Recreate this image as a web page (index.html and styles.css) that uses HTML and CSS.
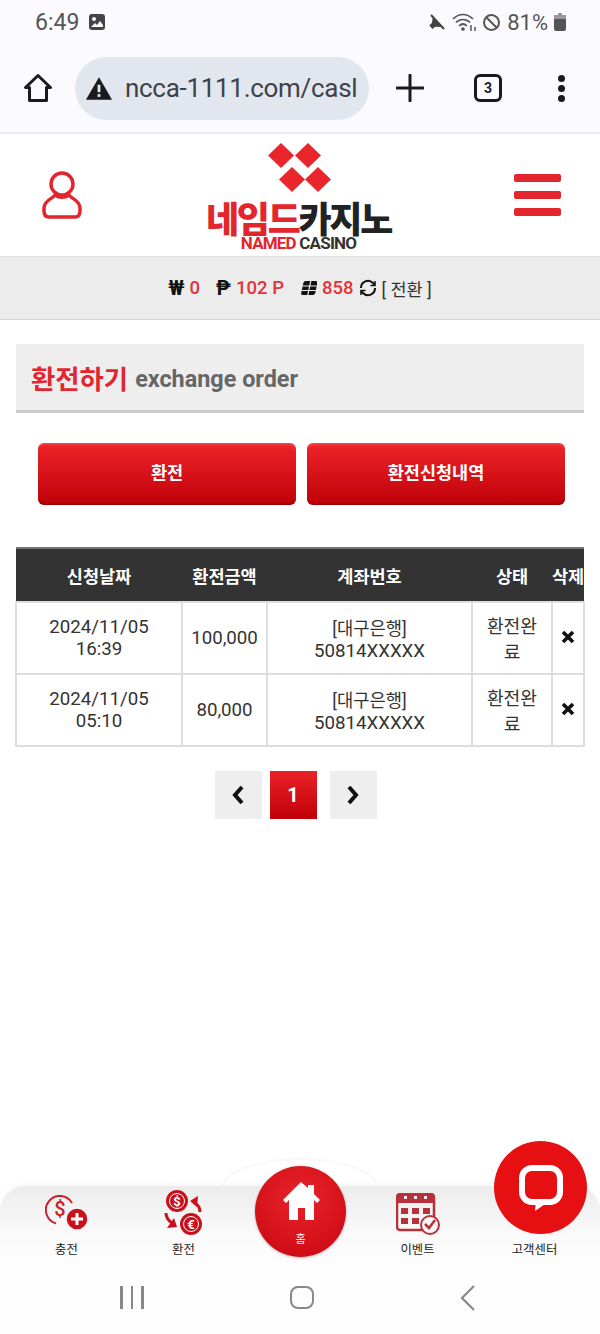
FILE: index.html
```html
<!DOCTYPE html>
<html lang="ko">
<head>
  <meta charset="UTF-8" />
  <meta name="viewport" content="width=device-width, initial-scale=1.0"/>
  <title>네임드카지노 - 환전하기</title>
  <link rel="stylesheet" href="styles.css">
</head>
<body>
<div class="page">

  <div class="status-bar">
    <div class="status-left">
      <span class="status-time">6:49</span>
      <svg width="18" height="18" viewBox="0 0 18 18"><rect x="1" y="1" width="16" height="16" rx="3" fill="#444"/><circle cx="6" cy="6" r="2" fill="#fafaff"/><path d="M3 14l4-4 2 2 3-4 3 4v2H3z" fill="#fafaff"/></svg>
    </div>
    <div class="status-right">
      <svg width="18" height="18" viewBox="0 0 18 18"><path d="M1 6.500h3.500L9.500 2v14L4.500 11.500H1z" fill="#444" transform="rotate(-40 9 9)"/><path d="M3 2l13 14" stroke="#444" stroke-width="2"/></svg>
      <svg class="wifi" width="24" height="20" viewBox="0 0 24 20" fill="none" stroke="#555" stroke-width="1.700"><path d="M1 7c6-6 14-6 20 0"/><path d="M4 10.500c4-4 10-4 14 0"/><path d="M7 14c2.500-2.500 5.500-2.500 8 0"/><circle cx="11" cy="17" r="1" fill="#555"/><path d="M19 19v-6M23 15l0 4" stroke-width="1.500"/></svg>
      <svg width="19" height="19" viewBox="0 0 19 19" fill="none" stroke="#555" stroke-width="2"><circle cx="9.500" cy="9.500" r="7.500"/><path d="M4 4l11 11"/></svg>
      <span>81%</span>
      <svg width="12" height="18" viewBox="0 0 12 18"><rect x="4" y="0" width="4" height="3" fill="#999"/><rect x="0" y="2" width="12" height="4" fill="#999"/><path d="M0 6h12v10a2 2 0 0 1-2 2H2a2 2 0 0 1-2-2z" fill="#555"/></svg>
    </div>
  </div>

  <div class="browser-bar">
    <svg class="browser-home" width="30" height="30" viewBox="0 0 30 30" fill="none" stroke="#1b1b1f" stroke-width="3" stroke-linejoin="round"><path d="M15 2.500L2.500 14.500H6.500V27.500H23.500V14.500H27.500z"/></svg>
    <div class="url-pill">
      <svg width="28" height="25" viewBox="0 0 30 26"><path d="M15 1L29 25H1z" fill="#1b1b1f"/><rect x="13.500" y="9" width="3" height="8" fill="#e2e6ef"/><rect x="13.500" y="19" width="3" height="3" fill="#e2e6ef"/></svg>
      <span class="url-text">ncca-1111.com/casl</span>
    </div>
    <svg class="browser-plus" width="28" height="28" viewBox="0 0 28 28"><path d="M14 1v26M1 14h26" stroke="#1b1b1f" stroke-width="3" stroke-linecap="round"/></svg>
    <div class="tab-count">3</div>
    <div class="browser-dots"><i></i><i></i><i></i></div>
  </div>

  <header class="site-header">
    <svg class="user-icon" width="42" height="48" viewBox="0 0 42 48" fill="none" stroke="#e3262e" stroke-width="3.500"><circle cx="21" cy="13" r="11"/><path d="M14 24c-1 3-11 5-11 13v3c0 4 2 6 5 6h26c3 0 5-2 5-6v-3c0-8-10-10-11-13c-4 3-10 3-14 0z" stroke-linejoin="round"/></svg>
    <div class="logo">
      <svg width="66" height="50" viewBox="0 0 66 50" fill="#e8262c"><path d="M15 0l13 12.500L15 25 2 12.500z"/><path d="M42 0l13 12.500L42 25 29 12.500z"/><path d="M26 24l13 12.500L26 49 13 36.500z"/><path d="M52 24l13 12.500L52 49 39 36.500z"/></svg>
      <div class="logo-kr"><span class="logo-red">네임드</span><span>카지노</span></div>
      <div class="logo-en"><span class="logo-red">NAMED</span> CASINO</div>
    </div>
    <div class="burger"><i></i><i></i><i></i></div>
  </header>

  <div class="coin-bar">
    <span class="coin-sym">₩</span><span class="coin-val coin-won">0</span>
    <span class="coin-sym coin-gap">₱</span><span class="coin-val coin-point">102 P</span>
    <svg class="coin-gap" width="17" height="16" viewBox="0 0 17 16"><g transform="skewX(-12)"><rect x="4" y="1" width="14" height="14" rx="2" fill="#111"/><path d="M11 1v14M4 6h14M4 10.500h14" stroke="#eee" stroke-width="1.200"/></g></svg>
    <span class="coin-val coin-chip">858</span>
    <svg class="coin-refresh" width="18" height="18" viewBox="0 0 18 18" fill="none" stroke="#111" stroke-width="2"><path d="M2 9a7 7 0 0 1 12-5l2 2"/><path d="M16 9a7 7 0 0 1-12 5l-2-2"/><path d="M16 2v4.500h-4.500M2 16v-4.500h4.500" stroke-width="1.500"/></svg>
    <span class="coin-link">[ 전환 ]</span>
  </div>

  <main class="content">
    <div class="page-title"><strong>환전하기</strong> <span>exchange order</span></div>

    <div class="tab-buttons">
      <a class="red-btn">환전</a>
      <a class="red-btn">환전신청내역</a>
    </div>

    <table class="order-table">
      <colgroup>
        <col class="col-date"><col class="col-amount"><col class="col-account"><col class="col-state"><col class="col-del">
      </colgroup>
      <thead>
        <tr><th>신청날짜</th><th>환전금액</th><th>계좌번호</th><th>상태</th><th>삭제</th></tr>
      </thead>
      <tbody>
        <tr>
          <td>2024/11/05<br>16:39</td>
          <td>100,000</td>
          <td><span class="bank-name">[대구은행]</span><br>50814XXXXX</td>
          <td class="cell-state">환전완료</td>
          <td><svg width="14" height="14" viewBox="0 0 14 14"><path d="M2 2l10 10M12 2L2 12" stroke="#111" stroke-width="3.600"/></svg></td>
        </tr>
        <tr>
          <td>2024/11/05<br>05:10</td>
          <td>80,000</td>
          <td><span class="bank-name">[대구은행]</span><br>50814XXXXX</td>
          <td class="cell-state">환전완료</td>
          <td><svg width="14" height="14" viewBox="0 0 14 14"><path d="M2 2l10 10M12 2L2 12" stroke="#111" stroke-width="3.600"/></svg></td>
        </tr>
      </tbody>
    </table>

    <div class="pager">
      <a class="pager-btn"><svg width="14" height="20" viewBox="0 0 14 20" fill="none" stroke="#111" stroke-width="4"><path d="M11 2L4 10l7 8"/></svg></a>
      <a class="pager-btn pager-on">1</a>
      <a class="pager-btn pager-next"><svg width="14" height="20" viewBox="0 0 14 20" fill="none" stroke="#111" stroke-width="4"><path d="M3 2l7 8-7 8"/></svg></a>
    </div>
  </main>

  <nav class="bottom-nav">
    <div class="home-bump"></div>
    <a class="nav-item">
      <svg class="icon-charge" width="44" height="36" viewBox="0 0 44 36"><path d="M27 8A14 14 0 1 0 11 28.400" fill="none" stroke="#c9202a" stroke-width="2"/><text x="15" y="21" class="nav-dollar" fill="#c9202a">$</text><circle cx="32" cy="24" r="11" fill="#c9101c" stroke="#f4f4f4" stroke-width="1.500"/><path d="M32 18v12M26 24h12" stroke="#fff" stroke-width="3"/></svg>
      <span>충전</span>
    </a>
    <a class="nav-item">
      <svg width="40" height="46" viewBox="0 0 40 46"><circle cx="13" cy="11" r="11" fill="#c9101c"/><circle cx="13" cy="11" r="7.500" fill="none" stroke="#fff" stroke-width="1"/><text x="13" y="15.500" class="nav-coin" fill="#fff">$</text><circle cx="27" cy="34" r="11" fill="#c9101c"/><circle cx="27" cy="34" r="7.500" fill="none" stroke="#fff" stroke-width="1"/><text x="27" y="38.500" class="nav-coin" fill="#fff">€</text><path d="M36 22C36 17 33 14 30 12.500" fill="none" stroke="#c9101c" stroke-width="3"/><path d="M26 11L34 6 33 17z" fill="#c9101c"/><path d="M2 23C2 28 5 31 8 33" fill="none" stroke="#c9101c" stroke-width="3"/><path d="M13 37L3 38 10 28z" fill="#c9101c"/></svg>
      <span>환전</span>
    </a>
    <a class="nav-item nav-home">
      <svg width="38" height="40" viewBox="0 0 38 40"><path d="M19 1L1 19l3 3 3-3v20h9V27h7v12h9V19l3 3 3-3-6-6V4h-6v3z" fill="#fff"/></svg>
      <span>홈</span>
    </a>
    <a class="nav-item">
      <svg class="icon-event" width="44" height="42" viewBox="0 0 44 42"><rect x="1" y="1" width="37" height="36" rx="3" fill="none" stroke="#b8303a" stroke-width="2.500"/><rect x="1" y="1" width="37" height="9" fill="#b8303a"/><g fill="#b8303a"><rect x="5" y="15" width="7" height="6"/><rect x="16" y="15" width="7" height="6"/><rect x="27" y="15" width="7" height="6"/><rect x="5" y="25" width="7" height="6"/><rect x="16" y="25" width="7" height="6"/></g><g fill="#f2f2f2"><rect x="8" y="3" width="3" height="3"/><rect x="18" y="3" width="3" height="3"/><rect x="28" y="3" width="3" height="3"/></g><circle cx="34" cy="32" r="9" fill="#f6f6f6" stroke="#b8303a" stroke-width="2"/><path d="M29 31l4 4 6-8" fill="none" stroke="#b8303a" stroke-width="2.500"/></svg>
      <span>이벤트</span>
    </a>
    <a class="nav-item nav-chat">
      <span>고객센터</span>
    </a>
    <a class="chat-fab">
      <svg width="46" height="46" viewBox="0 0 46 46"><rect x="4" y="3" width="38" height="34" rx="10" fill="none" stroke="#fff" stroke-width="6"/><path d="M18 35L17 46 33 35z" fill="#fff"/></svg>
    </a>
  </nav>

  <div class="android-nav">
    <div class="android-recent"><i></i><i></i><i></i></div>
    <div class="android-home"></div>
    <svg width="16" height="26" viewBox="0 0 16 26" fill="none" stroke="#888" stroke-width="2.200"><path d="M14 1L2 13l12 12"/></svg>
  </div>

</div>
</body>
</html>
```

FILE: styles.css
```css
* {
  box-sizing: border-box;
}
body {
  margin: 0;
  background: #fff;
  font-family: Roboto, 'Noto Sans CJK KR', sans-serif;
  color: #222;
}
.page {
  width: 600px;
  height: 1334px;
  display: flex;
  flex-direction: column;
  overflow: hidden;
}

/* phone status bar */
.status-bar {
  height: 44px;
  padding: 0 34px 0 35px;
  background: #fafaff;
  display: flex;
  justify-content: space-between;
  align-items: center;
  font-size: 22px;
  color: #555;
}
.status-left {
  display: flex;
  align-items: center;
  gap: 9px;
}
.status-time {
  font-size: 23px;
}
.status-right {
  display: flex;
  align-items: center;
  gap: 6px;
}

/* browser toolbar */
.browser-bar {
  height: 90px;
  padding: 0 0 0 23px;
  background: #fafaff;
  border-bottom: 2px solid #ebebeb;
  display: flex;
  align-items: center;
}
.url-pill {
  width: 294px;
  height: 63px;
  margin-left: 22px;
  padding-left: 10px;
  background: #e2e6ef;
  border-radius: 32px;
  display: flex;
  align-items: center;
  gap: 12px;
  overflow: hidden;
}
.url-text {
  width: 232px;
  overflow: hidden;
  white-space: nowrap;
  font-size: 26px;
  letter-spacing: -0.3px;
  color: #3f4248;
}
.browser-plus {
  margin-left: 27px;
}
.tab-count {
  width: 28px;
  height: 28px;
  margin-left: 50px;
  border: 3px solid #1b1b1f;
  border-radius: 6px;
  display: flex;
  justify-content: center;
  align-items: center;
  font-size: 14px;
  font-weight: 700;
  color: #1b1b1f;
}
.browser-dots {
  margin-left: 56px;
  display: flex;
  flex-direction: column;
  gap: 3px;
}
.browser-dots i {
  width: 7px;
  height: 7px;
  border-radius: 50%;
  background: #1b1b1f;
}

/* site header */
.site-header {
  height: 122px;
  padding: 0 39px 0 41px;
  display: flex;
  justify-content: space-between;
  align-items: center;
}
.logo {
  width: 190px;
  margin-top: 4px;
  display: flex;
  flex-direction: column;
  align-items: center;
}
.logo-kr {
  margin-top: 6px;
  font-family: 'Noto Sans CJK KR', sans-serif;
  font-size: 36px;
  font-weight: 900;
  line-height: 36px;
  letter-spacing: -2.300px;
  color: #222;
  white-space: nowrap;
}
.logo-en {
  margin-top: 0;
  font-size: 17px;
  font-weight: 700;
  line-height: 17px;
  letter-spacing: -0.800px;
  color: #333;
  white-space: nowrap;
}
.logo-red {
  color: #e3262e;
}
.burger {
  display: flex;
  flex-direction: column;
  gap: 9px;
}
.burger i {
  width: 47px;
  height: 8px;
  border-radius: 2px;
  background: #e3262e;
}

/* money bar */
.coin-bar {
  height: 64px;
  background: #ececec;
  border-top: 1px solid #ddd;
  border-bottom: 1px solid #d6d6d6;
  display: flex;
  justify-content: center;
  align-items: center;
  font-size: 18.500px;
  font-weight: 500;
}
.coin-sym {
  font-size: 20px;
  font-weight: 700;
  color: #111;
}
.coin-gap {
  margin-left: 16px;
}
.coin-val {
  margin-left: 5px;
  color: #e3323a;
}
.coin-refresh {
  margin-left: 5px;
}
.coin-link {
  margin-left: 5px;
  font-weight: 400;
  font-size: 17.500px;
  color: #333;
}

/* main */
.content {
  padding: 24px 16px 0;
}
.page-title {
  height: 69px;
  padding-left: 15px;
  background: #eee;
  border-bottom: 3px solid #ccc;
  display: flex;
  align-items: center;
  gap: 7px;
}
.page-title strong {
  font-size: 26.400px;
  font-weight: 700;
  color: #e3262e;
}
.page-title span {
  margin-top: 4px;
  font-size: 23.400px;
  font-weight: 700;
  color: #666;
}
.tab-buttons {
  margin: 30px 19px 0 22px;
  display: flex;
  gap: 11px;
}
.red-btn {
  flex: 1;
  height: 62px;
  padding-bottom: 5px;
  background: linear-gradient(#ee2528, #e01a20 30%, #c00008);
  border-radius: 6px;
  box-shadow: inset 0 -2px 2px rgba(90, 0, 0, 0.35), inset 0 2px 2px rgba(255, 255, 255, 0.15);
  display: flex;
  justify-content: center;
  align-items: center;
  font-size: 17.500px;
  font-weight: 700;
  color: #fff;
}

/* exchange list */
.order-table {
  width: 568px;
  margin: 42px 0 0 -1px;
  table-layout: fixed;
  border-collapse: collapse;
  font-size: 18.700px;
  color: #333;
}
.col-date { width: 166px; }
.col-amount { width: 85px; }
.col-account { width: 205px; }
.col-state { width: 80px; }
.col-del { width: 32px; }
.order-table th {
  height: 54px;
  padding: 0;
  background: #333;
  border-top: 2px solid #777;
  border-bottom: 1px solid #111;
  font-size: 17.500px;
  font-weight: 700;
  color: #fff;
  white-space: nowrap;
  overflow: hidden;
}
.order-table td {
  height: 72px;
  padding: 0;
  border: 2px solid #ddd;
  text-align: center;
  line-height: normal;
}
.bank-name {
  font-size: 17.700px;
}
.order-table .cell-state {
  padding: 0 6px;
  font-size: 18.200px;
}

.pager {
  margin-top: 24px;
  padding-right: 9px;
  display: flex;
  justify-content: center;
  gap: 8px;
}
.pager-btn {
  width: 47px;
  height: 48px;
  background: #eee;
  display: flex;
  justify-content: center;
  align-items: center;
  font-size: 20px;
  font-weight: 700;
}
.pager-on {
  background: linear-gradient(#ea2228, #c00008);
  color: #fff;
}
.pager-next {
  margin-left: 5px;
}

/* bottom menu */
.bottom-nav {
  height: 71px;
  margin-top: auto;
  padding: 0 9px 0 8px;
  background: linear-gradient(#ececec, #fafafa 70%, #fdfdfd);
  border-radius: 26px 26px 0 0;
  box-shadow: 0 -2px 4px rgba(0, 0, 0, 0.04);
  display: grid;
  grid-template-columns: repeat(5, 117px);
  position: relative;
}
.home-bump {
  position: absolute;
  left: 222px;
  top: -26px;
  z-index: -1;
  width: 156px;
  height: 60px;
  background: #fff;
  border-radius: 50%;
  box-shadow: 0 -1px 3px rgba(0, 0, 0, 0.06);
}
.nav-item {
  padding: 4px 0 0;
  display: flex;
  flex-direction: column;
  justify-content: space-between;
  align-items: center;
  font-size: 12.400px;
  color: #222;
  position: relative;
}
.nav-item span {
  margin-bottom: -1px;
}
.icon-charge {
  margin-top: 5px;
}
.icon-event {
  margin-top: 3px;
}
.nav-dollar {
  font-size: 20px;
  font-weight: 500;
  text-anchor: middle;
}
.nav-coin {
  font-size: 13px;
  font-weight: 700;
  text-anchor: middle;
}
.nav-home {
  width: 91px;
  height: 91px;
  margin: -20px 0 0 13px;
  padding: 15px 0 12px;
  background: radial-gradient(circle at 50% 35%, #e8232a, #d20f18 70%, #c00612);
  border-radius: 50%;
  box-shadow: 0 1px 3px rgba(0, 0, 0, 0.25);
  font-size: 11px;
  color: #fff;
}
.nav-chat {
  justify-content: flex-end;
}
.chat-fab {
  position: absolute;
  left: 494px;
  top: -45px;
  width: 93px;
  height: 93px;
  background: #e60f12;
  border-radius: 50%;
  display: flex;
  justify-content: center;
  align-items: center;
}

/* phone navigation */
.android-nav {
  height: 77px;
  padding: 4px 124px 0 120px;
  background: #fdfdfd;
  display: flex;
  justify-content: space-between;
  align-items: center;
}
.android-recent {
  display: flex;
  gap: 8px;
}
.android-recent i {
  width: 2.500px;
  height: 23px;
  background: #888;
}
.android-home {
  width: 24px;
  height: 23px;
  border: 2.500px solid #888;
  border-radius: 8px;
}
```
